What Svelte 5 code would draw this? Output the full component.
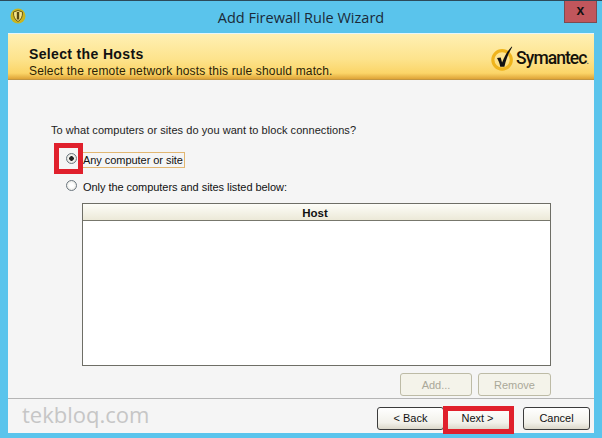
<script>
  let choice = 'any';
</script>

<div class="window">
  <div class="titlebar">
    <svg class="shield" width="16" height="16" viewBox="0 0 16 16">
      <circle cx="8" cy="8" r="7.5" fill="#c9b51e" />
      <path d="M3.5 4 L8 2.5 L12.5 4 C12.8 8.5 11 12 8 13.5 C5 12 3.2 8.5 3.5 4 Z" fill="#f4e58a" stroke="#6d5a14" stroke-width="1" />
      <path d="M8 4 V11.5" stroke="#5a4a10" stroke-width="2.4" />
    </svg>
    <span class="title">Add Firewall Rule Wizard</span>
    <div class="close">x</div>
  </div>

  <div class="client">
    <div class="banner">
      <div class="banner-text">
        <h1>Select the Hosts</h1>
        <p>Select the remote network hosts this rule should match.</p>
      </div>
      <div class="logo">
        <svg width="24" height="28" viewBox="0 0 26 30">
          <circle cx="12" cy="17" r="10" fill="none" stroke="#efb41c" stroke-width="3.4" />
          <path d="M6.5 15 L10.5 14.5 L12 20 C14.5 13 18 7 22.5 2.5 L23 3 C19.5 8.5 16.5 16 14.5 24.5 L10 24.5 C9.5 21 8 17.5 6.5 15 Z" fill="#111" />
        </svg>
        <span>Symantec<small>.</small></span>
      </div>
    </div>

    <div class="body">
      <p class="question">To what computers or sites do you want to block connections?</p>

      <label class="radio first">
        <input type="radio" bind:group={choice} value="any" />
        <span class="focused">Any computer or site</span>
      </label>
      <label class="radio">
        <input type="radio" bind:group={choice} value="only" />
        <span>Only the computers and sites listed below:</span>
      </label>

      <div class="list">
        <div class="list-head">Host</div>
      </div>

      <div class="list-actions">
        <button class="btn add" disabled>Add...</button>
        <button class="btn remove" disabled>Remove</button>
      </div>
    </div>

    <div class="footer">
      <span class="watermark">tekbloq.com</span>
      <button class="btn nav">&lt; Back</button>
      <button class="btn nav next">Next &gt;</button>
      <button class="btn nav cancel">Cancel</button>
    </div>
  </div>

  <div class="mark mark-radio"></div>
  <div class="mark mark-next"></div>
</div>

<style>
  :global(body) {
    margin: 0;
    background: #5ac4ec;
  }

  .window {
    position: relative;
    box-sizing: border-box;
    width: 602px;
    height: 438px;
    overflow: hidden;
    background: #5ac4ec;
    border-top: 1px solid #2c4a5a;
    font-family: "Liberation Sans", Arial, sans-serif;
    font-size: 11px;
    color: #111;
  }

  .titlebar {
    position: relative;
    display: flex;
    align-items: center;
    justify-content: center;
    height: 32px;
  }

  .shield {
    position: absolute;
    left: 10px;
    top: 7px;
  }

  .title {
    font-family: "Open Sans", "Liberation Sans", sans-serif;
    font-size: 14.5px;
    color: #1b2a38;
  }

  .close {
    position: absolute;
    top: 0;
    right: 5px;
    width: 33px;
    height: 22px;
    box-sizing: border-box;
    background: #c1565c;
    border: 1px solid #7d4a50;
    border-top: none;
    color: #111;
    font-weight: bold;
    font-size: 14px;
    line-height: 19px;
    text-align: center;
  }

  .client {
    margin: 0 8px;
    height: 400px;
    display: flex;
    flex-direction: column;
    background: #f5f5f5;
    border-top: 1px solid #e6f6fc;
    box-sizing: border-box;
  }

  .banner {
    display: flex;
    justify-content: space-between;
    height: 46px;
    box-sizing: border-box;
    padding: 13px 0 0 21px;
    background: linear-gradient(#fff0b4 0%, #fde38c 55%, #fbd568 85%, #e0a73a 97%, #b08b45 100%);
  }

  h1 {
    margin: 0;
    font-size: 14px;
    line-height: 15px;
    font-weight: bold;
    letter-spacing: 0.35px;
    color: #111;
  }

  .banner p {
    margin: 3px 0 0;
    font-size: 12px;
    line-height: 13px;
    letter-spacing: 0.16px;
    color: #2a1d05;
  }

  .logo {
    display: flex;
    align-items: flex-end;
    margin: -10px 6px 0 0;
    height: 44px;
  }

  .logo svg {
    margin-right: 1px;
    margin-bottom: 9px;
  }

  .logo span {
    font-family: Roboto, "Liberation Sans", sans-serif;
    font-size: 17.5px;
    font-weight: 500;
    letter-spacing: -0.95px;
    line-height: 24px;
    margin-bottom: 8px;
    color: #15120a;
  }

  .logo small {
    font-size: 9px;
    color: #555;
  }

  .body {
    flex: 1;
    padding: 43px 43px 0 43px;
  }

  .question {
    margin: 0 0 16px;
    line-height: 14px;
    letter-spacing: 0.05px;
    color: #222;
  }

  .radio {
    display: flex;
    align-items: center;
    height: 14px;
    margin: 0 0 13px 15px;
    letter-spacing: -0.05px;
  }

  .radio input {
    appearance: none;
    box-sizing: border-box;
    width: 11px;
    height: 11px;
    margin: -4px 6px 0 0;
    border-radius: 50%;
    border: 1px solid #6c7780;
    background: radial-gradient(circle, #fff 30%, #dcdcd4 100%);
    flex: none;
  }

  .radio input:checked {
    background: radial-gradient(circle, #222 0 2px, #f4f4f0 2.6px, #d8d8d0 100%);
  }

  .focused {
    outline: 1px solid #e2b772;
    padding-right: 1px;
    line-height: 14px;
  }

  .list {
    box-sizing: border-box;
    width: 469px;
    height: 163px;
    margin: -4px 0 0 31px;
    background: #fff;
    border: 1px solid #6e6e66;
  }

  .list-head {
    height: 16px;
    padding-right: 3px;
    line-height: 18px;
    text-align: center;
    font-weight: bold;
    font-size: 11.5px;
    background: linear-gradient(#fdfdf8, #ece9d8);
    border-bottom: 1px solid #77776c;
  }

  .list-actions {
    display: flex;
    justify-content: flex-end;
    gap: 6px;
    width: 500px;
    margin-top: 7px;
  }

  .btn {
    box-sizing: border-box;
    height: 23px;
    padding: 0;
    border: 1px solid #4f4f4f;
    border-radius: 3px;
    background: linear-gradient(#ffffff, #f2f1ea 70%, #dcd8ca);
    font-family: inherit;
    font-size: 11px;
    color: #111;
  }

  .btn:disabled {
    background: #f4f3ea;
    border-color: #bdbba6;
    color: #aaa899;
  }

  .add {
    width: 72px;
  }

  .remove {
    width: 73px;
  }

  .footer {
    position: relative;
    display: flex;
    align-items: center;
    justify-content: flex-end;
    box-sizing: border-box;
    height: 35px;
    padding: 4px 4px 0 0;
    border-top: 1px solid #b5b5b5;
  }

  .nav {
    width: 67px;
    border-color: #3c3c3c;
  }

  .next {
    margin-right: 12px;
  }

  .watermark {
    position: absolute;
    left: 14px;
    top: 0;
    font-family: "Open Sans", "Liberation Sans", sans-serif;
    font-size: 22px;
    line-height: 30px;
    color: #c6c6c6;
  }

  .mark {
    position: absolute;
    box-sizing: border-box;
    border: 5px solid #e0202c;
  }

  .mark-radio {
    left: 54px;
    top: 142px;
    width: 29px;
    height: 31px;
  }

  .mark-next {
    left: 443px;
    top: 405px;
    width: 71px;
    height: 28px;
  }
</style>
